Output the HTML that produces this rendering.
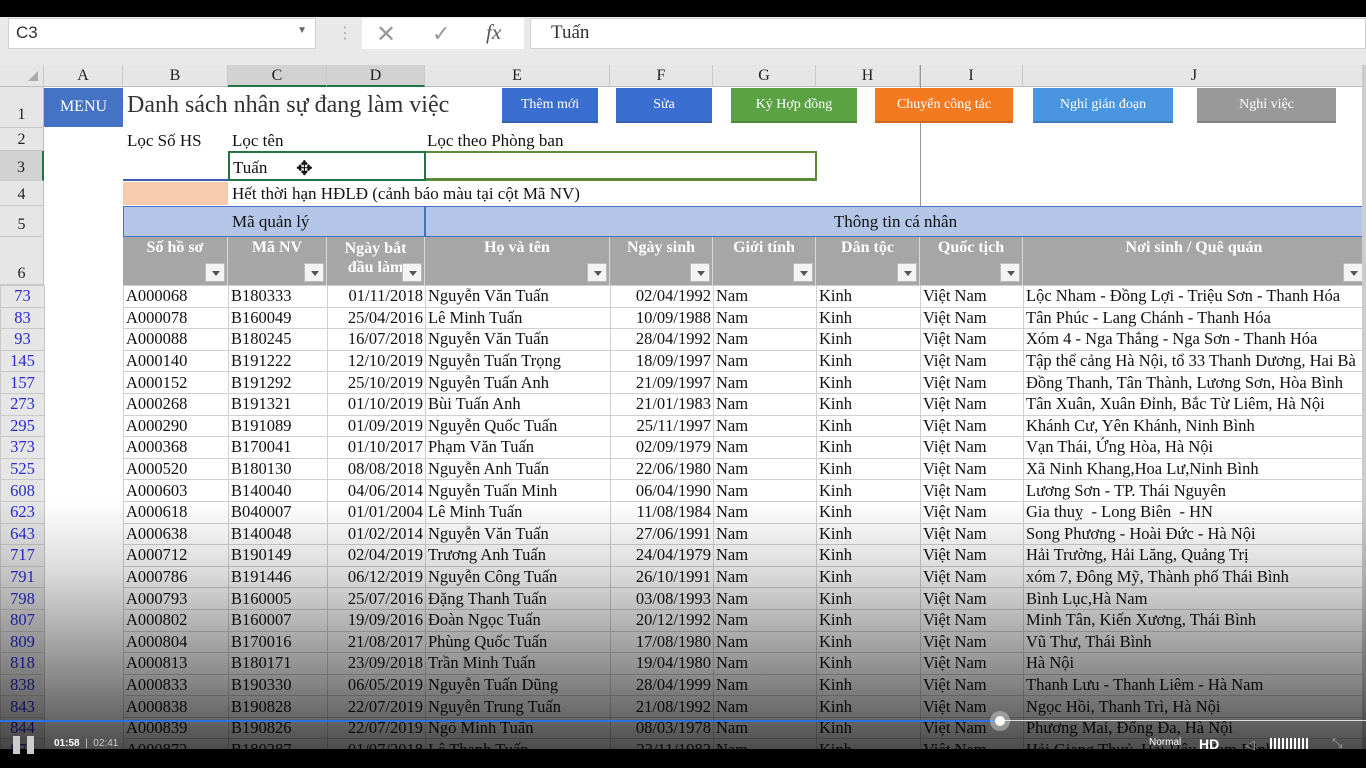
<!DOCTYPE html>
<html><head><meta charset="utf-8">
<style>
*{margin:0;padding:0;box-sizing:border-box}
body{width:1366px;height:768px;overflow:hidden;background:#fff;position:relative;font-family:"Liberation Serif",serif;color:#111}
.abs{position:absolute}
#top{left:0;top:0;width:1366px;height:17px;background:#000}
#fbar{left:0;top:17px;width:1366px;height:48px;background:#e9e9e9}
.box{position:absolute;background:#fff;border:1px solid #d0d0d0}
#colh{left:0;top:65px;width:1366px;height:22px;background:#e6e6e6;border-bottom:1px solid #bdbdbd}
.ch{position:absolute;top:0;height:22px;line-height:22px;text-align:center;font-size:16px;border-right:1px solid #c8c8c8;color:#222}
.rh{position:absolute;left:0;width:44px;background:#e6e6e6;border-bottom:1px solid #c8c8c8;border-right:1px solid #bdbdbd;font-size:16px;text-align:center;color:#222}
.btn{position:absolute;top:88px;height:35px;color:#fff;font-size:14px;text-align:center;line-height:33px;border-bottom:2px solid rgba(0,0,0,.15)}
table{position:absolute;left:0;top:285px;border-collapse:collapse;table-layout:fixed;width:1366px}
td{height:21.6px;border:1px solid #d0d0d0;font-size:16.5px;white-space:nowrap;overflow:hidden;padding:0 2px;line-height:20px}
td.r{text-align:right}
td.n{background:#e6e6e6;color:#2a2ad0;text-align:center;border-color:#c8c8c8}
td.a{border:none;border-right:1px solid #d0d0d0}
.hd{position:absolute;top:237px;height:48px;background:#a6a6a6;color:#fff;font-weight:bold;font-size:16px;text-align:center;border-right:1px solid #d8d8d8;padding-top:2px}
.dd{position:absolute;right:2px;bottom:3px;width:20px;height:19px;background:#f4f4f4;border:1px solid #bbb}
.dd:after{content:"";position:absolute;left:6px;top:7px;border:4px solid transparent;border-top:5px solid #555}
</style></head><body>
<div class="abs" id="top"></div>
<div class="abs" id="fbar">
 <div class="box" style="left:8px;top:1px;width:308px;height:31px;font-family:'Liberation Sans',sans-serif;font-size:17px;padding:4px 7px;color:#333">C3<span style="position:absolute;right:8px;top:6px;font-size:10px;color:#666">▼</span></div>
 <div class="abs" style="left:337px;top:6px;color:#aaa;font-size:16px">⋮</div>
 <div class="box" style="left:362px;top:1px;width:162px;height:31px;border:none;background:#fff"><span class="abs" style="left:14px;top:2px;font-size:24px;color:#999;font-family:'Liberation Sans',sans-serif">✕</span><span class="abs" style="left:70px;top:3px;font-size:22px;color:#999">✓</span><span class="abs" style="left:124px;top:2px;font-size:21px;font-style:italic;color:#555">fx</span></div>
 <div class="box" style="left:530px;top:1px;width:836px;height:31px;font-size:19px;padding:3px 20px;color:#333">Tuấn</div>
</div>
<div class="abs" id="colh">
 <div class="ch" style="left:0;width:44px"><span style="position:absolute;left:28px;top:6px;border:5px solid transparent;border-right-color:#aaa;border-bottom-color:#aaa"></span></div>
 <div class="ch" style="left:44px;width:79px">A</div>
 <div class="ch" style="left:123px;width:105px">B</div>
 <div class="ch" style="left:228px;width:99px;background:#d2d2d2;border-bottom:2px solid #217346">C</div>
 <div class="ch" style="left:327px;width:98px;background:#d2d2d2;border-bottom:2px solid #217346">D</div>
 <div class="ch" style="left:425px;width:185px">E</div>
 <div class="ch" style="left:610px;width:103px">F</div>
 <div class="ch" style="left:713px;width:103px">G</div>
 <div class="ch" style="left:816px;width:104px">H</div>
 <div class="ch" style="left:920px;width:103px">I</div>
 <div class="ch" style="left:1023px;width:343px">J</div>
</div>
<div class="rh" style="top:87px;height:41px;line-height:56px">1</div>
<div class="rh" style="top:128px;height:23px;line-height:24px">2</div>
<div class="rh" style="top:151px;height:30px;line-height:34px;background:#d2d2d2;border-right:2px solid #217346">3</div>
<div class="rh" style="top:181px;height:25px;line-height:28px">4</div>
<div class="rh" style="top:206px;height:31px;line-height:38px">5</div>
<div class="rh" style="top:237px;height:48px;line-height:74px">6</div>
<div class="abs" style="left:920px;top:65px;width:1px;height:141px;background:#999"></div>
<div class="abs" style="left:44px;top:88px;width:79px;height:39px;background:#4472c4;color:#fff;font-size:16px;text-align:center;line-height:38px">MENU</div>
<div class="abs" style="left:127px;top:92px;font-size:24px;color:#333">Danh sách nhân sự đang làm việc</div>
<div class="btn" style="left:502px;width:96px;background:#3a6fd1">Thêm mới</div>
<div class="btn" style="left:616px;width:96px;background:#3a6fd1">Sửa</div>
<div class="btn" style="left:731px;width:126px;background:#5aa243">Ký Hợp đồng</div>
<div class="btn" style="left:875px;width:138px;background:#f47a22">Chuyển công tác</div>
<div class="btn" style="left:1033px;width:140px;background:#4a95e0">Nghỉ gián đoạn</div>
<div class="btn" style="left:1197px;width:139px;background:#999">Nghỉ việc</div>
<div class="abs" style="left:127px;top:131px;font-size:17px">Lọc Số HS</div>
<div class="abs" style="left:232px;top:131px;font-size:17px">Lọc tên</div>
<div class="abs" style="left:427px;top:131px;font-size:17px">Lọc theo Phòng ban</div>
<div class="abs" style="left:123px;top:151px;width:105px;height:30px;border-bottom:2px solid #3a5fb0"></div>
<div class="abs" style="left:228px;top:151px;width:198px;height:30px;border:2px solid #217346;font-size:17px;padding:5px 3px">Tuấn<span style="position:absolute;left:66px;top:3px;font-size:20px">✥</span></div>
<div class="abs" style="left:426px;top:151px;width:391px;height:30px;border:2px solid #5a8a3a;border-left:none;border-bottom-width:3px"></div>
<div class="abs" style="left:123px;top:182px;width:105px;height:23px;background:#f8cbad"></div>
<div class="abs" style="left:232px;top:184px;font-size:17px">Hết thời hạn HĐLĐ (cảnh báo màu tại cột Mã NV)</div>
<div class="abs" style="left:123px;top:206px;width:302px;height:31px;background:#b4c6e7;border:1px solid #4472c4;font-size:17px;padding:5px 108px">Mã quản lý</div>
<div class="abs" style="left:425px;top:206px;width:941px;height:31px;background:#b4c6e7;border:1px solid #4472c4;font-size:17px;text-align:center;line-height:29px">Thông tin cá nhân</div>
<div class="hd" style="left:123px;width:105px">Số hồ sơ<div class="dd"></div></div>
<div class="hd" style="left:228px;width:99px">Mã NV<div class="dd"></div></div>
<div class="hd" style="left:327px;width:98px;line-height:19px">Ngày bắt<br>đầu làm<div class="dd"></div></div>
<div class="hd" style="left:425px;width:185px">Họ và tên<div class="dd" style="background:#f4f4f4"></div></div>
<div class="hd" style="left:610px;width:103px">Ngày sinh<div class="dd"></div></div>
<div class="hd" style="left:713px;width:103px">Giới tính<div class="dd"></div></div>
<div class="hd" style="left:816px;width:104px">Dân tộc<div class="dd"></div></div>
<div class="hd" style="left:920px;width:103px">Quốc tịch<div class="dd"></div></div>
<div class="hd" style="left:1023px;width:343px">Nơi sinh / Quê quán<div class="dd"></div></div>
<table>
<colgroup><col style="width:44px"><col style="width:79px"><col style="width:105px"><col style="width:99px"><col style="width:98px"><col style="width:185px"><col style="width:103px"><col style="width:103px"><col style="width:104px"><col style="width:103px"><col style="width:343px"></colgroup>
<tr><td class="n">73</td><td class="a"></td><td>A000068</td><td>B180333</td><td class="r">01/11/2018</td><td>Nguyễn Văn Tuấn</td><td class="r">02/04/1992</td><td>Nam</td><td>Kinh</td><td>Việt Nam</td><td>Lộc Nham - Đồng Lợi - Triệu Sơn - Thanh Hóa</td></tr>
<tr><td class="n">83</td><td class="a"></td><td>A000078</td><td>B160049</td><td class="r">25/04/2016</td><td>Lê Minh Tuấn</td><td class="r">10/09/1988</td><td>Nam</td><td>Kinh</td><td>Việt Nam</td><td>Tân Phúc - Lang Chánh - Thanh Hóa</td></tr>
<tr><td class="n">93</td><td class="a"></td><td>A000088</td><td>B180245</td><td class="r">16/07/2018</td><td>Nguyễn Văn Tuấn</td><td class="r">28/04/1992</td><td>Nam</td><td>Kinh</td><td>Việt Nam</td><td>Xóm 4 - Nga Thắng - Nga Sơn - Thanh Hóa</td></tr>
<tr><td class="n">145</td><td class="a"></td><td>A000140</td><td>B191222</td><td class="r">12/10/2019</td><td>Nguyễn Tuấn Trọng</td><td class="r">18/09/1997</td><td>Nam</td><td>Kinh</td><td>Việt Nam</td><td>Tập thể cảng Hà Nội, tổ 33 Thanh Dương, Hai Bà</td></tr>
<tr><td class="n">157</td><td class="a"></td><td>A000152</td><td>B191292</td><td class="r">25/10/2019</td><td>Nguyễn Tuấn Anh</td><td class="r">21/09/1997</td><td>Nam</td><td>Kinh</td><td>Việt Nam</td><td>Đồng Thanh, Tân Thành, Lương Sơn, Hòa Bình</td></tr>
<tr><td class="n">273</td><td class="a"></td><td>A000268</td><td>B191321</td><td class="r">01/10/2019</td><td>Bùi Tuấn Anh</td><td class="r">21/01/1983</td><td>Nam</td><td>Kinh</td><td>Việt Nam</td><td>Tân Xuân, Xuân Đỉnh, Bắc Từ Liêm, Hà Nội</td></tr>
<tr><td class="n">295</td><td class="a"></td><td>A000290</td><td>B191089</td><td class="r">01/09/2019</td><td>Nguyễn Quốc Tuấn</td><td class="r">25/11/1997</td><td>Nam</td><td>Kinh</td><td>Việt Nam</td><td>Khánh Cư, Yên Khánh, Ninh Bình</td></tr>
<tr><td class="n">373</td><td class="a"></td><td>A000368</td><td>B170041</td><td class="r">01/10/2017</td><td>Phạm Văn Tuấn</td><td class="r">02/09/1979</td><td>Nam</td><td>Kinh</td><td>Việt Nam</td><td>Vạn Thái, Ứng Hòa, Hà Nội</td></tr>
<tr><td class="n">525</td><td class="a"></td><td>A000520</td><td>B180130</td><td class="r">08/08/2018</td><td>Nguyễn Anh Tuấn</td><td class="r">22/06/1980</td><td>Nam</td><td>Kinh</td><td>Việt Nam</td><td>Xã Ninh Khang,Hoa Lư,Ninh Bình</td></tr>
<tr><td class="n">608</td><td class="a"></td><td>A000603</td><td>B140040</td><td class="r">04/06/2014</td><td>Nguyễn Tuấn Minh</td><td class="r">06/04/1990</td><td>Nam</td><td>Kinh</td><td>Việt Nam</td><td>Lương Sơn - TP. Thái Nguyên</td></tr>
<tr><td class="n">623</td><td class="a"></td><td>A000618</td><td>B040007</td><td class="r">01/01/2004</td><td>Lê Minh Tuấn</td><td class="r">11/08/1984</td><td>Nam</td><td>Kinh</td><td>Việt Nam</td><td>Gia thuỵ&nbsp; - Long Biên&nbsp; - HN</td></tr>
<tr><td class="n">643</td><td class="a"></td><td>A000638</td><td>B140048</td><td class="r">01/02/2014</td><td>Nguyễn Văn Tuấn</td><td class="r">27/06/1991</td><td>Nam</td><td>Kinh</td><td>Việt Nam</td><td>Song Phương - Hoài Đức - Hà Nội</td></tr>
<tr><td class="n">717</td><td class="a"></td><td>A000712</td><td>B190149</td><td class="r">02/04/2019</td><td>Trương Anh Tuấn</td><td class="r">24/04/1979</td><td>Nam</td><td>Kinh</td><td>Việt Nam</td><td>Hải Trường, Hải Lăng, Quảng Trị</td></tr>
<tr><td class="n">791</td><td class="a"></td><td>A000786</td><td>B191446</td><td class="r">06/12/2019</td><td>Nguyễn Công Tuấn</td><td class="r">26/10/1991</td><td>Nam</td><td>Kinh</td><td>Việt Nam</td><td>xóm 7, Đông Mỹ, Thành phố Thái Bình</td></tr>
<tr><td class="n">798</td><td class="a"></td><td>A000793</td><td>B160005</td><td class="r">25/07/2016</td><td>Đặng Thanh Tuấn</td><td class="r">03/08/1993</td><td>Nam</td><td>Kinh</td><td>Việt Nam</td><td>Bình Lục,Hà Nam</td></tr>
<tr><td class="n">807</td><td class="a"></td><td>A000802</td><td>B160007</td><td class="r">19/09/2016</td><td>Đoàn Ngọc Tuấn</td><td class="r">20/12/1992</td><td>Nam</td><td>Kinh</td><td>Việt Nam</td><td>Minh Tân, Kiến Xương, Thái Bình</td></tr>
<tr><td class="n">809</td><td class="a"></td><td>A000804</td><td>B170016</td><td class="r">21/08/2017</td><td>Phùng Quốc Tuấn</td><td class="r">17/08/1980</td><td>Nam</td><td>Kinh</td><td>Việt Nam</td><td>Vũ Thư, Thái Bình</td></tr>
<tr><td class="n">818</td><td class="a"></td><td>A000813</td><td>B180171</td><td class="r">23/09/2018</td><td>Trần Minh Tuấn</td><td class="r">19/04/1980</td><td>Nam</td><td>Kinh</td><td>Việt Nam</td><td>Hà Nội</td></tr>
<tr><td class="n">838</td><td class="a"></td><td>A000833</td><td>B190330</td><td class="r">06/05/2019</td><td>Nguyễn Tuấn Dũng</td><td class="r">28/04/1999</td><td>Nam</td><td>Kinh</td><td>Việt Nam</td><td>Thanh Lưu - Thanh Liêm - Hà Nam</td></tr>
<tr><td class="n">843</td><td class="a"></td><td>A000838</td><td>B190828</td><td class="r">22/07/2019</td><td>Nguyễn Trung Tuấn</td><td class="r">21/08/1992</td><td>Nam</td><td>Kinh</td><td>Việt Nam</td><td>Ngọc Hồi, Thanh Trì, Hà Nội</td></tr>
<tr><td class="n">844</td><td class="a"></td><td>A000839</td><td>B190826</td><td class="r">22/07/2019</td><td>Ngô Minh Tuấn</td><td class="r">08/03/1978</td><td>Nam</td><td>Kinh</td><td>Việt Nam</td><td>Phương Mai, Đống Đa, Hà Nội</td></tr>
<tr><td class="n">877</td><td class="a"></td><td>A000872</td><td>B180287</td><td class="r">01/07/2018</td><td>Lê Thanh Tuấn</td><td class="r">23/11/1982</td><td>Nam</td><td>Kinh</td><td>Việt Nam</td><td>Hải Giang Thuỷ, Hải Hậu, Nam Định</td></tr>
</table>
<div class="abs" style="left:1362px;top:65px;width:4px;height:684px;background:#ccc"></div>
<div class="abs" style="left:0;top:500px;width:1366px;height:249px;background:linear-gradient(to bottom,rgba(0,0,0,0) 0%,rgba(0,0,0,.15) 30%,rgba(0,0,0,.45) 70%,rgba(0,0,0,.7) 100%)"></div>
<div class="abs" style="left:0;top:749px;width:1366px;height:19px;background:#000"></div>
<div class="abs" style="left:0;top:720px;width:1000px;height:2px;background:#2f6fe6"></div>
<div class="abs" style="left:1000px;top:720px;width:366px;height:1px;background:#ddd"></div>
<div class="abs" style="left:990px;top:711px;width:20px;height:20px;border-radius:50%;background:rgba(255,255,255,.35)"></div>
<div class="abs" style="left:995px;top:716px;width:10px;height:10px;border-radius:50%;background:#fff"></div>
<div class="abs" style="left:13px;top:736px;width:7px;height:18px;background:#ccc"></div>
<div class="abs" style="left:27px;top:736px;width:7px;height:18px;background:#ccc"></div>
<div class="abs" style="left:54px;top:738px;font-family:'Liberation Sans',sans-serif;font-size:10px;color:#fff;font-weight:bold">01:58 <span style="font-weight:normal;color:#ccc">&nbsp;|&nbsp; 02:41</span></div>
<div class="abs" style="left:1149px;top:737px;font-family:'Liberation Sans',sans-serif;font-size:10px;color:#fff">Normal</div>
<div class="abs" style="left:1199px;top:736px;font-family:'Liberation Sans',sans-serif;font-size:14px;color:#fff;font-weight:bold">HD</div>
<div class="abs" style="left:1245px;top:738px;font-size:13px;color:#999;font-family:'DejaVu Sans',sans-serif">◁</div>
<div class="abs" style="left:1270px;top:738px;width:38px;height:11px;background:repeating-linear-gradient(to right,#fff 0 2px,transparent 2px 4px)"></div>
<div class="abs" style="left:1332px;top:736px;font-size:13px;color:#aaa;font-family:'DejaVu Sans',sans-serif">⤡</div>
</body></html>
